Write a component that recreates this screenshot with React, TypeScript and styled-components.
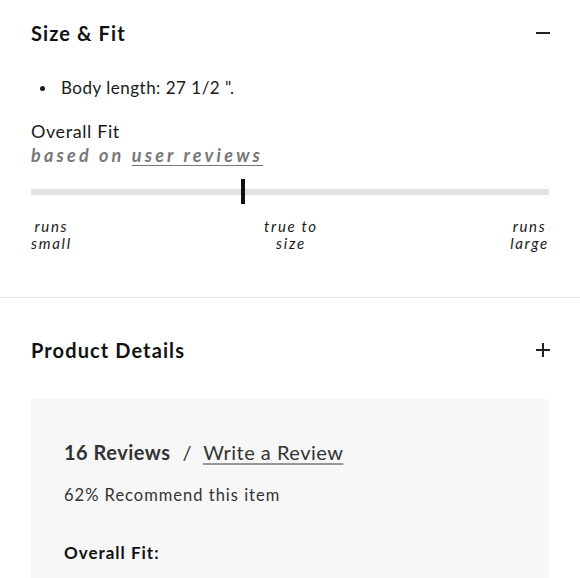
import React from "react";
import styled, { createGlobalStyle } from "styled-components";

const Global = createGlobalStyle`
  html, body { margin: 0; padding: 0; background: #fff; }
  body { font-family: Lato, "Noto Sans", Arial, sans-serif; color: #1a1a1a; }
`;

const Page = styled.div`
  width: 580px;
  display: flex;
  flex-direction: column;
`;

const Section = styled.section<{ $top: number; $bottom: number; $divider?: boolean }>`
  padding: ${(p) => p.$top}px 31px ${(p) => p.$bottom}px 31px;
  border-bottom: ${(p) => (p.$divider ? "1px solid #e6e6e6" : "none")};
  display: flex;
  flex-direction: column;
`;

const Header = styled.div`
  display: flex;
  align-items: center;
  justify-content: space-between;
  height: 24px;
`;

const Title = styled.h2`
  margin: 0;
  font-size: 20px;
  line-height: 24px;
  font-weight: 700;
  letter-spacing: 1.1px;
  color: #111;
`;

const Toggle = styled.span`
  position: relative;
  width: 14px;
  height: 14px;
  margin-right: -1px;
  display: block;
`;

const Bar = styled.span<{ $vertical?: boolean }>`
  position: absolute;
  background: #222;
  ${(p) =>
    p.$vertical
      ? "left: 6px; top: 0; width: 2px; height: 14px;"
      : "left: 0; top: 6px; width: 14px; height: 2px;"}
`;

const List = styled.ul`
  list-style: none;
  margin: 33px 0 0 0;
  padding: 0;
`;

const Item = styled.li`
  display: flex;
  align-items: center;
  font-size: 17px;
  line-height: 20px;
  letter-spacing: 0.5px;
  color: #1a1a1a;
`;

const Dot = styled.span`
  width: 5px;
  height: 5px;
  border-radius: 50%;
  background: #1a1a1a;
  margin: 0 16px 0 9px;
`;

const FitLabel = styled.div`
  margin-top: 21px;
  font-size: 18px;
  line-height: 24px;
  letter-spacing: 0.6px;
  color: #1a1a1a;
`;

const FitSub = styled.div`
  font-size: 18px;
  line-height: 24px;
  font-weight: 700;
  font-style: italic;
  letter-spacing: 3.2px;
  color: #777;
`;

const SubLink = styled.span`
  text-decoration: underline;
  text-underline-offset: 3px;
  text-decoration-thickness: 1px;
`;

const Slider = styled.div`
  position: relative;
  height: 25px;
  margin-top: 12px;
  display: flex;
  align-items: center;
`;

const Track = styled.div`
  width: 100%;
  height: 6px;
  background: #e0e0e0;
`;

const Marker = styled.div`
  position: absolute;
  top: 0;
  width: 4px;
  height: 25px;
  background: #111;
  transform: translateX(-2px);
`;

const Scale = styled.div`
  margin-top: 14px;
  display: flex;
  justify-content: space-between;
`;

const ScaleLabel = styled.div`
  display: flex;
  flex-direction: column;
  align-items: center;
`;

const ScaleLine = styled.span`
  font-size: 15px;
  line-height: 17px;
  height: 17px;
  font-style: italic;
  color: #1a1a1a;
  letter-spacing: 1.7px;
`;

const ReviewBox = styled.div`
  margin: 37px 31px 0 31px;
  background: #f7f7f7;
  padding: 39px 33px 30px 33px;
  display: flex;
  flex-direction: column;
`;

const ReviewHead = styled.div`
  display: flex;
  align-items: center;
  font-size: 20px;
  line-height: 28px;
  letter-spacing: 0.5px;
  color: #333;
`;

const Count = styled.span`
  font-weight: 700;
`;

const Slash = styled.span`
  margin: 0 11px 0 12px;
`;

const WriteLink = styled.a`
  color: #333;
  text-decoration: underline;
  text-decoration-color: #999;
  text-underline-offset: 3px;
  text-decoration-thickness: 2px;
`;

const Recommend = styled.div`
  margin-top: 17px;
  font-size: 16.5px;
  line-height: 24px;
  letter-spacing: 1px;
  color: #333;
`;

const FitTitle = styled.div`
  margin-top: 34px;
  font-size: 17px;
  line-height: 24px;
  font-weight: 700;
  letter-spacing: 1px;
  color: #111;
`;

const fitValue = 0.41;

const scaleLabels = [
  ["runs", "small"],
  ["true to", "size"],
  ["runs", "large"],
];

export default function App() {
  return (
    <Page>
      <Global />
      <Section $top={21} $bottom={45} $divider>
        <Header>
          <Title>Size &amp; Fit</Title>
          <Toggle>
            <Bar />
          </Toggle>
        </Header>
        <List>
          <Item>
            <Dot />
            Body length: 27 1/2 ".
          </Item>
        </List>
        <FitLabel>Overall Fit</FitLabel>
        <FitSub>
          based on <SubLink>user reviews</SubLink>
        </FitSub>
        <Slider>
          <Track />
          <Marker style={{ left: `${fitValue * 100}%` }} />
        </Slider>
        <Scale>
          {scaleLabels.map(([a, b]) => (
            <ScaleLabel key={a + b}>
              <ScaleLine>{a}</ScaleLine>
              <ScaleLine>{b}</ScaleLine>
            </ScaleLabel>
          ))}
        </Scale>
      </Section>
      <Section $top={40} $bottom={0}>
        <Header>
          <Title>Product Details</Title>
          <Toggle>
            <Bar />
            <Bar $vertical />
          </Toggle>
        </Header>
      </Section>
      <ReviewBox>
        <ReviewHead>
          <Count>16 Reviews</Count>
          <Slash>/</Slash>
          <WriteLink href="#">Write a Review</WriteLink>
        </ReviewHead>
        <Recommend>62% Recommend this item</Recommend>
        <FitTitle>Overall Fit:</FitTitle>
      </ReviewBox>
    </Page>
  );
}
